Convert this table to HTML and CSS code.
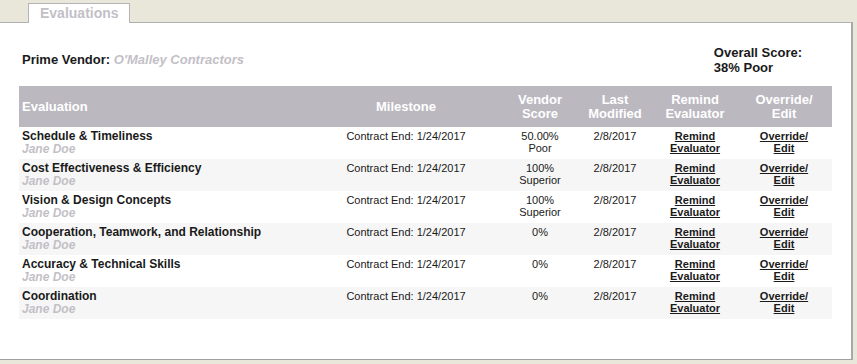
FILE: index.html
```html
<!DOCTYPE html>
<html>
<head>
<meta charset="utf-8">
<link rel="stylesheet" href="styles.css">
</head>
<body>
<div class="tabs"><div class="tab">Evaluations</div></div>
<div class="panel">
  <div class="top">
    <div class="prime"><b>Prime Vendor:</b> <span class="vendor">O'Malley Contractors</span></div>
    <div class="overall">Overall Score:<br>38% Poor</div>
  </div>
  <table class="evals">
    <colgroup>
      <col class="c-eval"><col class="c-mile"><col class="c-score"><col class="c-mod"><col class="c-remind"><col class="c-edit">
    </colgroup>
    <thead>
      <tr><th class="left">Evaluation</th><th>Milestone</th><th>Vendor<br>Score</th><th>Last<br>Modified</th><th>Remind<br>Evaluator</th><th>Override/<br>Edit</th></tr>
    </thead>
    <tbody>
      <tr><td class="left"><div class="title">Schedule &amp; Timeliness</div><div class="who">Jane Doe</div></td><td>Contract End: 1/24/2017</td><td>50.00%<br>Poor</td><td>2/8/2017</td><td><a href="#">Remind<br>Evaluator</a></td><td><a href="#">Override/<br>Edit</a></td></tr>
      <tr class="alt"><td class="left"><div class="title">Cost Effectiveness &amp; Efficiency</div><div class="who">Jane Doe</div></td><td>Contract End: 1/24/2017</td><td>100%<br>Superior</td><td>2/8/2017</td><td><a href="#">Remind<br>Evaluator</a></td><td><a href="#">Override/<br>Edit</a></td></tr>
      <tr><td class="left"><div class="title">Vision &amp; Design Concepts</div><div class="who">Jane Doe</div></td><td>Contract End: 1/24/2017</td><td>100%<br>Superior</td><td>2/8/2017</td><td><a href="#">Remind<br>Evaluator</a></td><td><a href="#">Override/<br>Edit</a></td></tr>
      <tr class="alt"><td class="left"><div class="title">Cooperation, Teamwork, and Relationship</div><div class="who">Jane Doe</div></td><td>Contract End: 1/24/2017</td><td>0%</td><td>2/8/2017</td><td><a href="#">Remind<br>Evaluator</a></td><td><a href="#">Override/<br>Edit</a></td></tr>
      <tr><td class="left"><div class="title">Accuracy &amp; Technical Skills</div><div class="who">Jane Doe</div></td><td>Contract End: 1/24/2017</td><td>0%</td><td>2/8/2017</td><td><a href="#">Remind<br>Evaluator</a></td><td><a href="#">Override/<br>Edit</a></td></tr>
      <tr class="alt"><td class="left"><div class="title">Coordination</div><div class="who">Jane Doe</div></td><td>Contract End: 1/24/2017</td><td>0%</td><td>2/8/2017</td><td><a href="#">Remind<br>Evaluator</a></td><td><a href="#">Override/<br>Edit</a></td></tr>
    </tbody>
  </table>
</div>
</body>
</html>
```

FILE: styles.css
```css
html, body {
  margin: 0;
  padding: 0;
}
body {
  background: #e8e7d9;
  font-family: "Liberation Sans", Arial, sans-serif;
  color: #1a1a1a;
  width: 857px;
  height: 364px;
  overflow: hidden;
}
.tabs {
  padding: 3px 0 0 28px;
  height: 19px;
}
.tab {
  width: 102px;
  height: 20px;
  box-sizing: border-box;
  border: 1px solid #b4b4b4;
  border-bottom: none;
  background: #fff;
  color: #c3bfc7;
  font-size: 14px;
  font-weight: bold;
  line-height: 18px;
  padding-left: 11px;
  position: relative;
  z-index: 1;
}
.panel {
  width: 853px;
  height: 338px;
  background: #fff;
  border-top: 1px solid #b0b0b0;
  border-right: 2px solid #a8a8a8;
  border-bottom: 1px solid #a0a0a0;
  padding-top: 22px;
  box-sizing: border-box;
}
.top {
  display: flex;
  justify-content: space-between;
  margin-left: 22px;
  width: 780px;
  height: 41px;
}
.prime {
  margin-top: 7px;
  font-size: 13px;
  line-height: 15px;
}
.vendor {
  color: #c3bfc7;
  font-weight: bold;
  font-style: italic;
}
.overall {
  font-size: 13px;
  font-weight: bold;
  line-height: 15px;
}
.evals {
  margin-left: 19px;
  width: 813px;
  table-layout: fixed;
  border-collapse: collapse;
  border-spacing: 0;
}
.c-eval { width: 289px; }
.c-mile { width: 196px; }
.c-score { width: 72px; }
.c-mod { width: 78px; }
.c-remind { width: 82px; }
.c-edit { width: 96px; }
.evals th {
  background: #bbb8c0;
  color: #fff;
  font-size: 13px;
  font-weight: bold;
  line-height: 14px;
  height: 40px;
  padding: 1px 0 0;
  text-align: center;
  vertical-align: middle;
}
.evals th.left {
  text-align: left;
  padding-left: 3px;
}
.evals td {
  height: 32px;
  padding: 3px 0 0;
  box-sizing: border-box;
  vertical-align: top;
  text-align: center;
  font-size: 11px;
  line-height: 12px;
}
.evals td.left {
  text-align: left;
  padding: 3px 0 0 3px;
}
.evals tr.alt td {
  background: #f6f6f6;
}
.title {
  font-size: 12px;
  font-weight: bold;
  line-height: 13px;
}
.who {
  font-size: 12px;
  font-weight: bold;
  font-style: italic;
  line-height: 13px;
  color: #c3bfc7;
}
.evals a {
  color: #1a1a1a;
  font-weight: bold;
  text-decoration: underline;
}
```
